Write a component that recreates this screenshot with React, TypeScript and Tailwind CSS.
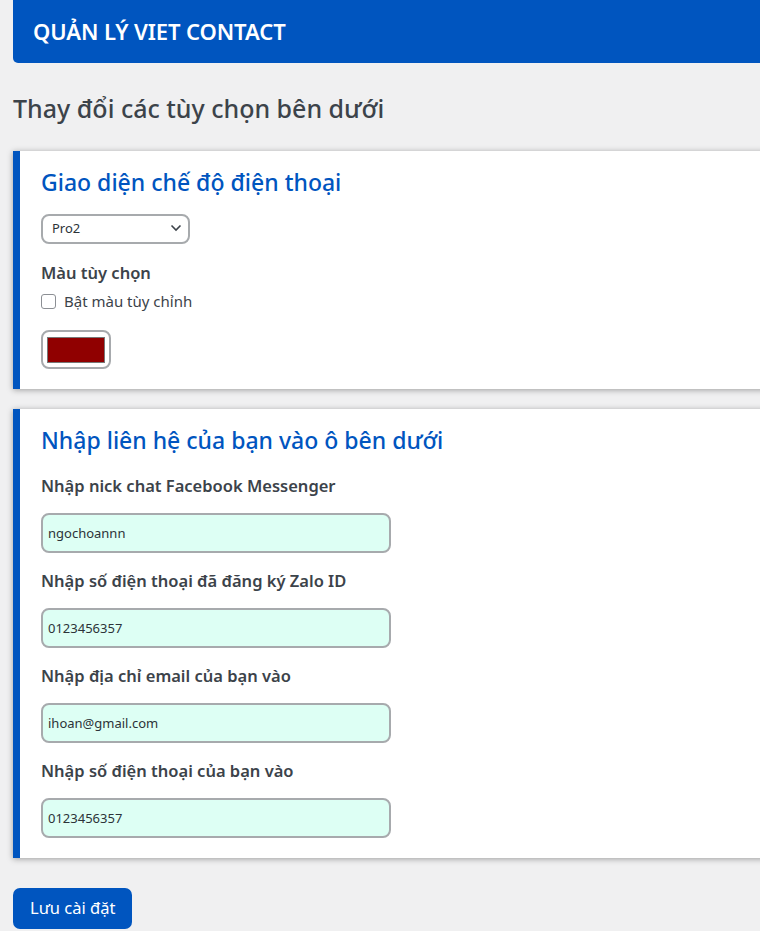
import { useState } from 'react';

const fields = [
  { label: 'Nhập nick chat Facebook Messenger', value: 'ngochoannn' },
  { label: 'Nhập số điện thoại đã đăng ký Zalo ID', value: '0123456357' },
  { label: 'Nhập địa chỉ email của bạn vào', value: 'ihoan@gmail.com' },
  { label: 'Nhập số điện thoại của bạn vào', value: '0123456357' },
];

function Card({ title, children }: { title: string; children: React.ReactNode }) {
  return (
    <div className="ml-[13px] w-[760px] bg-white border-l-[7px] border-[#0055bf] shadow-[0_1px_6px_rgba(0,0,0,0.35)] pl-[21px] pt-[16px] pb-[20px]">
      <h2 className="text-[23px] leading-[30px] text-[#0055bf] font-medium">{title}</h2>
      {children}
    </div>
  );
}

export default function App() {
  const [values, setValues] = useState(fields.map((f) => f.value));
  const [custom, setCustom] = useState(false);

  return (
    <div className="min-h-[931px] bg-[#f0f0f1] overflow-hidden text-[#3c434a] font-['Noto_Sans',sans-serif]">
      <div className="ml-[13px] w-[760px] h-[63px] bg-[#0055bf] rounded-bl-[5px] flex items-center pl-[20px]">
        <h1 className="text-white text-[22px] font-semibold tracking-[-0.1px]">QUẢN LÝ VIET CONTACT</h1>
      </div>

      <h2 className="ml-[13px] mt-[27px] text-[25px] leading-[36px] font-medium">Thay đổi các tùy chọn bên dưới</h2>

      <div className="mt-[25px]">
        <Card title="Giao diện chế độ điện thoại">
          <div className="mt-[17px] relative w-[149px]">
            <select className="appearance-none w-full h-[30px] border-2 border-[#a7aaad] rounded-[8px] pl-[9px] text-[13px] text-[#2c3338] bg-white outline-none">
              <option>Pro2</option>
              <option>Pro1</option>
            </select>
            <svg className="absolute right-[8px] top-[10px] pointer-events-none" width="12" height="8" viewBox="0 0 12 8" fill="none">
              <path d="M1.5 1.5 6 6l4.5-4.5" stroke="#3c434a" strokeWidth="1.6" />
            </svg>
          </div>

          <div className="mt-[17px] text-[16.5px] font-semibold leading-[24px]">Màu tùy chọn</div>
          <label className="mt-[6px] flex items-center gap-[8px] text-[15px] leading-[20px]">
            <input
              type="checkbox"
              checked={custom}
              onChange={(e) => setCustom(e.target.checked)}
              className="appearance-none w-[15px] h-[15px] border border-[#8c8f94] rounded-[3px] bg-white"
            />
            Bật màu tùy chỉnh
          </label>

          <div className="mt-[19px] w-[70px] h-[39px] border-2 border-[#a7aaad] rounded-[8px] flex items-center justify-center bg-white">
            <div className="w-[58px] h-[26px] bg-[#900000] border border-[#777]" />
          </div>
        </Card>
      </div>

      <div className="mt-[20px]">
        <Card title="Nhập liên hệ của bạn vào ô bên dưới">
          <div className="mt-[19px] flex flex-col gap-[16px]">
            {fields.map((f, i) => (
              <div key={f.label}>
                <div className="text-[16.5px] font-semibold leading-[24px]">{f.label}</div>
                <input
                  value={values[i]}
                  onChange={(e) => setValues(values.map((v, j) => (j === i ? e.target.value : v)))}
                  className="mt-[15px] block w-[350px] h-[40px] border-2 border-[#a7aaad] rounded-[8px] bg-[#ddfff4] px-[5px] text-[13px] text-[#2c3338] outline-none"
                />
              </div>
            ))}
          </div>
        </Card>
      </div>

      <button className="ml-[13px] mt-[30px] h-[41px] px-[17px] bg-[#0055bf] text-white text-[16.5px] rounded-[7px]">
        Lưu cài đặt
      </button>
    </div>
  );
}
